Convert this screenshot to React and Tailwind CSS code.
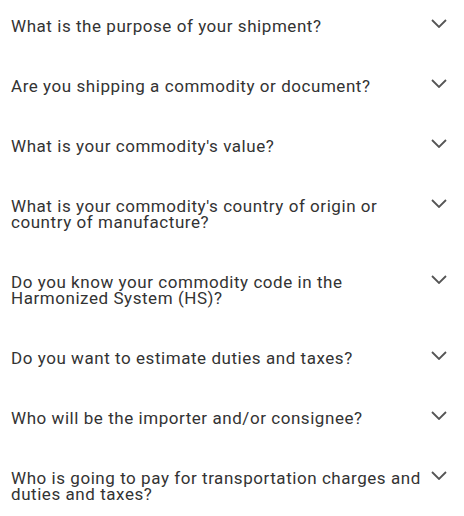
const questions = [
  ['What is the purpose of your shipment?'],
  ['Are you shipping a commodity or document?'],
  ["What is your commodity's value?"],
  ["What is your commodity's country of origin or country of manufacture?"],
  ['Do you know your commodity code in the Harmonized System (HS)?'],
  ['Do you want to estimate duties and taxes?'],
  ['Who will be the importer and/or consignee?'],
  ['Who is going to pay for transportation charges and duties and taxes?'],
]

function Chevron() {
  return (
    <svg width="16" height="9" viewBox="0 0 16 9" className="shrink-0 mt-[1px]" fill="none">
      <path d="M1 1l7 7 7-7" stroke="#555" strokeWidth="1.8" />
    </svg>
  )
}

export default function App() {
  return (
    <div className="w-[464px] bg-white font-['Roboto',sans-serif] text-[#333]">
      {questions.map(([q]) => (
        <div key={q} className="flex items-start gap-1 pl-[11px] pr-[17px] pt-[18px] pb-[26px]">
          <p className="flex-1 text-[17px] leading-[16px] tracking-[0.55px]">{q}</p>
          <Chevron />
        </div>
      ))}
    </div>
  )
}
